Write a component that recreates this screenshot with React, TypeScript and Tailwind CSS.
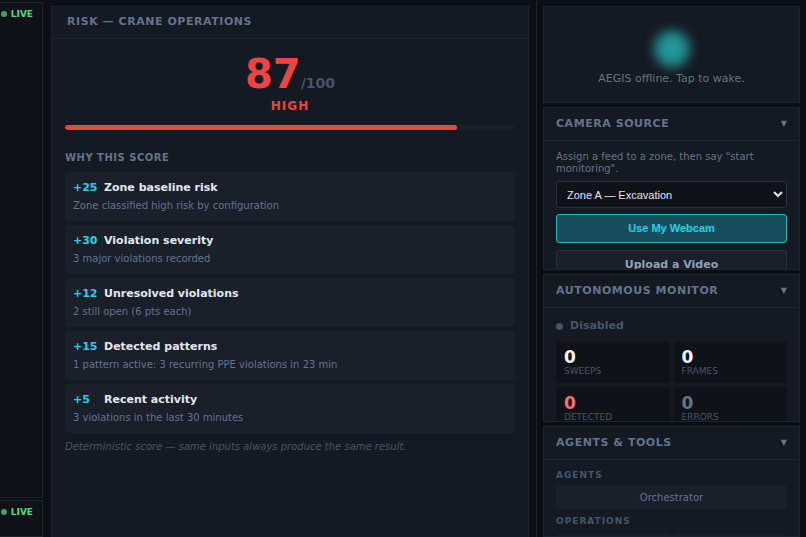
import React from 'react';

const factors = [
  { points: 25, title: 'Zone baseline risk', detail: 'Zone classified high risk by configuration' },
  { points: 30, title: 'Violation severity', detail: '3 major violations recorded' },
  { points: 12, title: 'Unresolved violations', detail: '2 still open (6 pts each)' },
  { points: 15, title: 'Detected patterns', detail: '1 pattern active: 3 recurring PPE violations in 23 min' },
  { points: 5, title: 'Recent activity', detail: '3 violations in the last 30 minutes' },
];

const stats = [
  { label: 'SWEEPS', value: 0, color: 'text-slate-100' },
  { label: 'FRAMES', value: 0, color: 'text-slate-100' },
  { label: 'DETECTED', value: 0, color: 'text-[#f87171]' },
  { label: 'ERRORS', value: 0, color: 'text-slate-500' },
];

const score = 87;

function Feed({ className }: { className: string }) {
  return (
    <div className={`flex items-start justify-end border-y border-r border-[#1e242e] bg-[#111217] pr-[9px] ${className}`}>
      <div className="mt-[5px] flex items-center gap-1 text-[9px] leading-3 font-bold text-[#4ade80]">
        <span className="size-1.5 rounded-full bg-[#3aa564]" />
        LIVE
      </div>
    </div>
  );
}

function Panel({ title, className, children }: { title: string; className: string; children: React.ReactNode }) {
  return (
    <section className={`flex flex-col overflow-hidden border border-[#1e242e] bg-[#151921] ${className}`}>
      <button className="flex h-[33px] shrink-0 items-center justify-between border-b border-[#1e242e] px-3 text-slate-500">
        <span className="text-[11px] font-bold tracking-wider">{title}</span>
        <span className="text-[8px]">▼</span>
      </button>
      <div className="px-3">{children}</div>
    </section>
  );
}

function RiskPanel() {
  return (
    <main className="flex min-w-0 flex-1 flex-col pt-1.5 pr-[7px] pl-2">
      <section className="flex flex-1 flex-col border border-b-0 border-[#1e242e] bg-[#151921]">
        <h2 className="flex h-8 items-center border-b border-[#1e242e] px-[15px] text-[11px] font-bold tracking-wider text-slate-500">
          RISK — CRANE OPERATIONS
        </h2>
        <div className="px-[13px] pt-[15px]">
          {/* Score */}
          <div className="text-center font-bold">
            <div className="text-[40px] leading-10 text-[#ef4444]">
              {score}
              <span className="text-sm text-slate-600">/100</span>
            </div>
            <div className="mt-1.5 text-xs leading-3 tracking-[1px] text-[#ef4444]">HIGH</div>
          </div>
          <div className="mt-[13px] h-[5px] overflow-hidden rounded-full bg-[#1b1f2a]">
            <div className="h-full rounded-full bg-[#ef4444]" style={{ width: `${score}%` }} />
          </div>

          {/* Breakdown */}
          <h3 className="mt-[22px] text-[10px] leading-3 font-bold tracking-wider text-slate-500">WHY THIS SCORE</h3>
          <ul className="mt-2 flex flex-col gap-1">
            {factors.map((f) => (
              <li key={f.title} className="rounded bg-[#1b1f2a] px-2 py-2">
                <div className="flex text-[11px] leading-4 font-bold">
                  <span className="w-[31px] text-[#22d3ee]">+{f.points}</span>
                  <span className="text-slate-200">{f.title}</span>
                </div>
                <p className="mt-[3px] text-[10px] leading-[14px] text-slate-500">{f.detail}</p>
              </li>
            ))}
          </ul>
          <p className="mt-1.5 text-[10px] leading-4 text-slate-600 italic">
            Deterministic score — same inputs always produce the same result.
          </p>
        </div>
      </section>
    </main>
  );
}

export default function App() {
  return (
    <div className="flex h-screen overflow-hidden bg-[#0c0f15] font-['DejaVu_Sans',sans-serif]">
      <div className="flex w-[43px] shrink-0 flex-col gap-0.5 pt-0.5">
        <Feed className="h-[496px]" />
        <Feed className="flex-1" />
      </div>

      <RiskPanel />

      <aside className="flex w-[270px] shrink-0 flex-col gap-1 border-l border-[#1e242e] bg-[#0b0e13] px-1.5 pt-1.5">
        <button className="flex h-[97px] shrink-0 flex-col items-center border border-[#1e242e] bg-[#151921] pt-6">
          <span className="size-9 rounded-full bg-[#239497] blur-[6px]" />
          <span className="mt-1 text-[11px] leading-4 text-slate-500">AEGIS offline. Tap to wake.</span>
        </button>

        <Panel title="CAMERA SOURCE" className="h-[163px] shrink-0">
          <p className="mt-2.5 text-[10px] leading-3 text-slate-500">
            Assign a feed to a zone, then say "start monitoring".
          </p>
          <select
            aria-label="Zone"
            className="mt-1.5 h-[27px] w-full rounded-[3px] border border-[#2a2f3b] bg-[#111217] px-1.5 font-['Liberation_Sans',sans-serif] text-[11px] text-slate-200"
          >
            <option>Zone A — Excavation</option>
          </select>
          <button className="mt-1.5 h-[29px] w-full rounded-[3px] border border-[#2bb3c4] bg-[#174f5f] font-['Liberation_Sans',sans-serif] text-[11px] font-bold text-[#22d3ee]">
            Use My Webcam
          </button>
          <label className="mt-[7px] flex h-[30px] items-center justify-center rounded-[3px] border border-[#2a2f3b] bg-[#1b1f2a] text-[11px] font-bold text-slate-400">
            Upload a Video
            <input type="file" accept="video/*" className="hidden" />
          </label>
        </Panel>

        <Panel title="AUTONOMOUS MONITOR" className="h-[148px] shrink-0">
          <div className="mt-2.5 flex items-center gap-[7px] text-[11px] leading-4 font-bold text-slate-600">
            <span className="size-[7px] rounded-full bg-slate-600" />
            Disabled
          </div>
          <div className="mt-[7px] grid grid-cols-2 gap-1">
            {stats.map((s) => (
              <div key={s.label} className="rounded-[3px] bg-[#111217] px-2 pt-[7px] pb-1.5">
                <div className={`text-[17px] leading-[18px] font-bold ${s.color}`}>{s.value}</div>
                <div className="text-[9px] leading-[11px] text-slate-600">{s.label}</div>
              </div>
            ))}
          </div>
        </Panel>

        <Panel title="AGENTS & TOOLS" className="flex-1">
          <h3 className="mt-[9px] text-[9px] leading-3 font-bold tracking-[1px] text-slate-600">AGENTS</h3>
          <button className="mt-1 h-6 w-full rounded-[3px] bg-[#1b1f2a] text-[10px] text-slate-500">
            Orchestrator
          </button>
          <h3 className="mt-1.5 text-[9px] leading-3 font-bold tracking-[1px] text-slate-600">OPERATIONS</h3>
          <div className="mt-[7px] grid grid-cols-2 gap-1">
            <div className="h-6 rounded-[3px] bg-[#1b1f2a]" />
            <div className="h-6 rounded-[3px] bg-[#1b1f2a]" />
          </div>
        </Panel>
      </aside>
    </div>
  );
}
